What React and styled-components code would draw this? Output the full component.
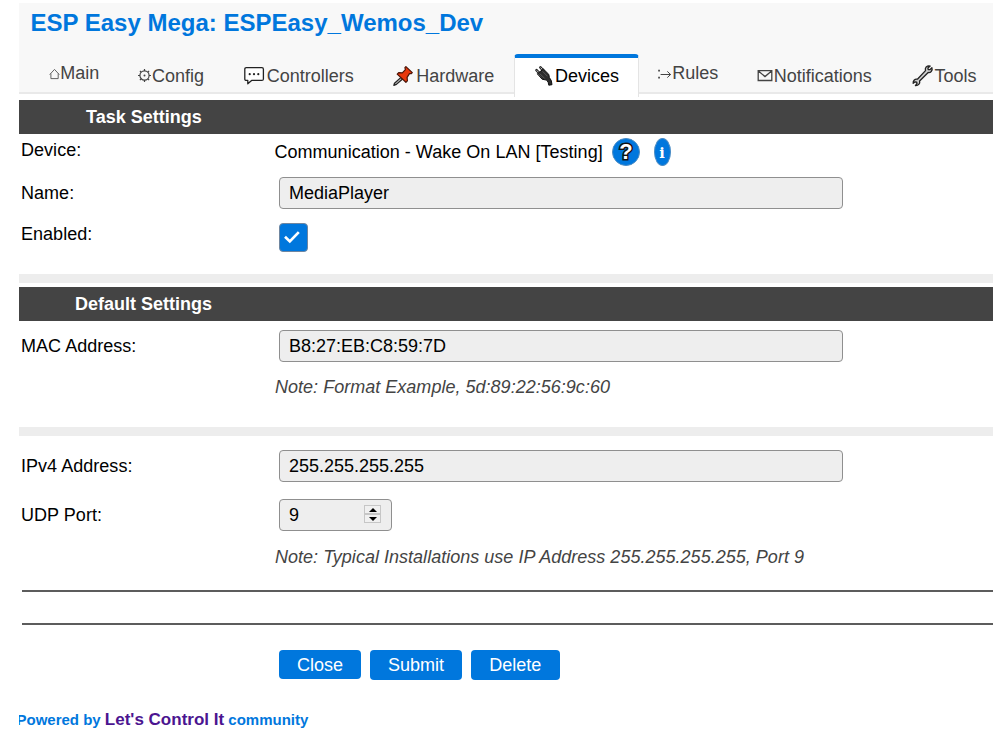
import React from "react";
import styled, { createGlobalStyle } from "styled-components";

const GlobalStyle = createGlobalStyle`
  * { box-sizing: border-box; }
  body {
    margin: 0;
    background: #fff;
    color: #000;
    font-family: "Liberation Sans", Arial, sans-serif;
    font-size: 18px;
    line-height: 20px;
  }
`;

const Page = styled.main`
  width: 974px;
  margin-left: 19px;
  padding-top: 3px;
  height: 750px;
  overflow: hidden;
`;

const Header = styled.header`
  height: 91px;
  background: #f8f8f8;
  border-bottom: 2px solid #e9e9e9;
`;

const Title = styled.h1`
  margin: 0;
  padding: 6px 0 0 11.5px;
  height: 51px;
  font-size: 24px;
  line-height: 28px;
  color: #0077dd;
`;

const Nav = styled.nav`
  display: flex;
  height: 43px;
`;

const Tab = styled.a`
  display: flex;
  width: ${(p) => p.$width}px;
  padding: ${(p) => (p.$raised ? 9 : 12)}px 0 0 ${(p) => p.$inset}px;
  height: 43px;
  color: #444;
  white-space: nowrap;
  border: 0 solid transparent;
  ${(p) =>
    p.$active &&
    `
    padding-top: 8px;
    padding-left: 20px;
    color: #000;
    background: #fff;
    border: 1px solid #e4e4e4;
    border-top: 4px solid #0077dd;
    border-bottom: 0;
    border-radius: 4px 4px 0 0;
  `}
`;

const Glyph = styled.span`
  flex: none;
  width: ${(p) => p.$width}px;
  height: 22px;

  svg {
    display: block;
    overflow: visible;
  }
`;

const SectionBar = styled.h2`
  margin: ${(p) => p.$top}px 0 0;
  height: ${(p) => p.$height}px;
  padding: 7px 0 0 ${(p) => p.$indent}px;
  font-size: 18px;
  line-height: 20px;
  color: #fff;
  background: #444;
`;

const Separator = styled.div`
  height: 9px;
  background: #ededed;
`;

const Row = styled.div`
  display: grid;
  grid-template-columns: 253.5px 1fr;
  align-items: start;
  height: ${(p) => p.$height}px;
  padding-left: 1.5px;
`;

const Label = styled.label`
  padding-top: ${(p) => p.$top}px;
  padding-left: 0.5px;
  letter-spacing: 0.03px;
`;

const Field = styled.div`
  display: flex;
  padding-top: ${(p) => p.$top}px;
  padding-left: 5px;
`;

const DeviceValue = styled.div`
  display: flex;
  padding-top: 4px;
`;

const DeviceName = styled.span`
  width: 338px;
  padding-top: 4px;
  padding-left: 0.5px;
  letter-spacing: 0.02px;
`;

const RoundButton = styled.a`
  display: flex;
  align-items: center;
  justify-content: center;
  width: ${(p) => p.$width}px;
  height: 28px;
  margin-right: 13.5px;
  border-radius: 50%;
  border: 1px solid #4b8cc4;
  background: #0077dd;
`;

const QuestionMark = styled.span`
  color: #fff;
  font-size: 22px;
  font-weight: bold;
  line-height: 24px;
  -webkit-text-stroke: 3px #111;
  paint-order: stroke fill;
`;

const InfoMark = styled.span`
  padding-top: 2px;
  color: #fff;
  font-family: "DejaVu Serif", serif;
  font-size: 14.5px;
  font-weight: bold;
  line-height: 22px;
`;

const TextBox = styled.input`
  width: 563.5px;
  height: 32px;
  padding: 1px 9px 0;
  border: 1px solid #8f8f8f;
  border-radius: 4px;
  background: #eee;
  color: #000;
  font: 18px "Liberation Sans", Arial, sans-serif;
  outline: 0;
`;

const NumberBox = styled.div`
  display: flex;
  justify-content: space-between;
  width: 113px;
  height: 32px;
  padding: 5px 10px 0 9px;
  border: 1px solid #8f8f8f;
  border-radius: 4px;
  background: #eee;
`;

const Spinner = styled.span`
  display: flex;
  flex-direction: column;
  width: 17px;
  height: 18px;
`;

const Step = styled.span`
  display: flex;
  align-items: center;
  justify-content: center;
  height: 9px;
  border: 1px solid #c6c6c6;
  background: #f0f0f0;

  &::after {
    content: "";
    border: 4px solid transparent;
    border-top-width: ${(p) => (p.$down ? 4 : 0)}px;
    border-bottom-width: ${(p) => (p.$down ? 0 : 4)}px;
    border-top-color: ${(p) => (p.$down ? "#000" : "transparent")};
    border-bottom-color: ${(p) => (p.$down ? "transparent" : "#000")};
  }
`;

const Checkbox = styled.span`
  width: 29px;
  height: 29px;
  border: 1px solid #6f86a0;
  border-radius: 4px;
  background: #0077dd;

  svg { display: block; }
`;

const Note = styled.em`
  display: block;
  padding-top: ${(p) => p.$top || 0}px;
  padding-left: 256px;
  height: ${(p) => p.$height}px;
  color: #444;
  letter-spacing: 0.02px;
`;

const Rule = styled.hr`
  height: 2px;
  margin: 0 0 ${(p) => p.$gap}px 2.5px;
  border: 0;
  background: #5c5c5c;
`;

const Actions = styled.div`
  display: flex;
  gap: 9px;
  height: 59px;
  padding-left: 260px;
`;

const Button = styled.button`
  width: ${(p) => p.$width}px;
  height: ${(p) => p.$height || 30}px;
  padding: ${(p) => (p.$height ? 1 : 0)}px 0 0;
  border: 0;
  border-radius: 4px;
  background: #0077dd;
  color: #fff;
  font: 18px "Liberation Sans", Arial, sans-serif;
`;

const Footer = styled.footer`
  margin-left: -2.5px;
  font-size: 15px;
  font-weight: bold;
  line-height: 21px;
  color: #0077dd;
  white-space: nowrap;
`;

const Community = styled.a`
  font-size: 17px;
  color: #4b1590;
`;

const HouseIcon = () => (
  <svg width="12" height="22" viewBox="0 0 12 22" fill="none" stroke="#555" strokeWidth="0.9">
    <path d="M0.7 11.6 5.5 6.4l4.8 5.2M1.9 10.6v5h7.3v-5" />
  </svg>
);

const GearIcon = () => (
  <svg width="14" height="22" viewBox="0 0 14 22" fill="none" stroke="#444" strokeWidth="1.2">
    <circle cx="6.5" cy="9.5" r="4.6" />
    <path d="M6.5 3v2M6.5 14v2M0 9.5h2M11 9.5h2M1.9 4.9l1.4 1.4M9.7 12.7l1.4 1.4M11.1 4.9 9.7 6.3M3.3 12.7l-1.4 1.4" />
    <circle cx="6.5" cy="9.5" r="1" fill="#444" stroke="none" />
  </svg>
);

const BubbleIcon = () => (
  <svg width="22" height="22" viewBox="0 0 22 22">
    <path
      d="M2.3 1.7h15.6q1.5 0 1.5 1.5v9.7q0 1.5-1.5 1.5H7.6L3.8 17.7v-3.3H2.3q-1.5 0-1.5-1.5V3.2q0-1.5 1.5-1.5z"
      fill="#fff"
      stroke="#222"
      strokeWidth="1.3"
      strokeLinejoin="round"
    />
    <g fill="#222">
      <circle cx="5.7" cy="8.2" r="1.1" />
      <circle cx="10" cy="8.2" r="1.1" />
      <circle cx="14.3" cy="8.2" r="1.1" />
    </g>
  </svg>
);

const PinIcon = () => (
  <svg width="22" height="22" viewBox="0 0 22 22" strokeLinejoin="round">
    <path d="M8 11.4 9.6 13 3.4 18.4 0.8 19.4l.7-2.2z" fill="#bbb" stroke="#222" strokeWidth="1.2" />
    <path
      d="M12.9 0.6 19.3 6.6l-1 1.1-1.8-.1-2.4 3.8.3 3.4-1.5 1.5L4.2 8.1l1.5-1.5 3.6.3 3.1-3.2-.5-2z"
      fill="#e8380c"
      stroke="#4a1508"
      strokeWidth="1.2"
    />
  </svg>
);

const PlugIcon = () => (
  <svg width="21" height="22" viewBox="0 0 21 22" strokeLinejoin="round" strokeLinecap="round">
    <path d="M1.5 4.2 4.5 7.4M5.4 1.4 8.3 4.6" stroke="#222" strokeWidth="2.6" />
    <path d="M2 4.7 4 6.8M5.8 1.8 7.8 4" stroke="#ddd" strokeWidth="0.9" />
    <path
      d="M2.6 7.6 8.4 3l5.4 5.4.6 3.3q2.4 2 2.6 7l-3.2.5q-.2-3.4-2.2-5.1l-4.1-.8z"
      fill="#2d2d2d"
      stroke="#111"
      strokeWidth="1"
    />
    <path d="M5 7.8l4.4 4.4M7.8 5.6l4.4 4.4" stroke="#777" strokeWidth="0.6" />
  </svg>
);

const RuleIcon = () => (
  <svg width="16" height="22" viewBox="0 0 16 22" fill="none" stroke="#444" strokeWidth="1">
    <path d="M1.2 7.6h1.7M1.2 14.6h1.7" strokeWidth="1.7" />
    <path d="M3.6 11.5h10M10.3 8.4l3.3 3.1-3.3 3.1" />
  </svg>
);

const EnvelopeIcon = () => (
  <svg width="17" height="22" viewBox="0 0 17 22" fill="none" stroke="#444" strokeWidth="1.3">
    <path d="M1.2 4.7h13.6v9.8H1.2zM1.4 5 8 10.6 14.6 5" />
  </svg>
);

const WrenchIcon = () => (
  <svg width="23" height="22" viewBox="0 0 23 22">
    <path
      d="M14.2 0.9q1.8-1.6 4-.9L15.9 2l.3 1.5 1.6.2 2.1-1.9q.8 2-.7 3.7-1.2 1.3-3 1L7.6 15q.6 1.9-.8 3.4-1.3 1.4-3.4 1.2l1.6-2.1-.3-1.4-1.5-.3-2 1.5q-.3-1.8.9-3.1 1.3-1.4 3.3-1L13.5 4.6q-.6-2.2.7-3.7z"
      fill="#ccc"
      stroke="#222"
      strokeWidth="1.3"
      strokeLinejoin="round"
    />
  </svg>
);

const TABS = [
  { name: "Main", icon: HouseIcon, glyph: 11.3, inset: 30, width: 118, raised: true },
  { name: "Config", icon: GearIcon, glyph: 14, inset: 1, width: 106 },
  { name: "Controllers", icon: BubbleIcon, glyph: 23, inset: 0.7, width: 149 },
  { name: "Hardware", icon: PinIcon, glyph: 23, inset: 1.3, width: 122 },
  { name: "Devices", icon: PlugIcon, glyph: 20, width: 124.5, active: true },
  { name: "Rules", icon: RuleIcon, glyph: 15, inset: 18.8, width: 117.5, raised: true },
  { name: "Notifications", icon: EnvelopeIcon, glyph: 17, inset: 0.7, width: 155 },
  { name: "Tools", icon: WrenchIcon, glyph: 22.5, inset: 1, width: 82 },
];

export default function App() {
  return (
    <>
      <GlobalStyle />
      <Page>
        <Header>
          <Title>ESP Easy Mega: ESPEasy_Wemos_Dev</Title>
          <Nav>
            {TABS.map(({ name, icon: Icon, glyph, inset, width, raised, active }) => (
              <Tab key={name} $width={width} $inset={inset} $raised={raised} $active={active}>
                <Glyph $width={glyph}>
                  <Icon />
                </Glyph>
                {name}
              </Tab>
            ))}
          </Nav>
        </Header>

        <SectionBar $top={6} $height={34} $indent={67}>Task Settings</SectionBar>
        <Row $height={39}>
          <Label $top={6}>Device:</Label>
          <DeviceValue>
            <DeviceName>Communication - Wake On LAN [Testing]</DeviceName>
            <RoundButton $width={28}>
              <QuestionMark>?</QuestionMark>
            </RoundButton>
            <RoundButton $width={17}>
              <InfoMark>i</InfoMark>
            </RoundButton>
          </DeviceValue>
        </Row>
        <Row $height={46}>
          <Label $top={10}>Name:</Label>
          <Field $top={4}>
            <TextBox defaultValue="MediaPlayer" />
          </Field>
        </Row>
        <Row $height={55}>
          <Label $top={5}>Enabled:</Label>
          <Field $top={4}>
            <Checkbox>
              <svg width="27" height="27" viewBox="0 0 27 27" fill="none" stroke="#fff" strokeWidth="2.7">
                <path d="M5 12.8l4.8 4.6 9-9.3" />
              </svg>
            </Checkbox>
          </Field>
        </Row>
        <Separator />

        <SectionBar $top={4} $height={34} $indent={56}>Default Settings</SectionBar>
        <Row $height={56}>
          <Label $top={15}>MAC Address:</Label>
          <Field $top={9}>
            <TextBox defaultValue="B8:27:EB:C8:59:7D" />
          </Field>
        </Row>
        <Note $height={50}>Note: Format Example, 5d:89:22:56:9c:60</Note>
        <Separator />

        <Row $height={58}>
          <Label $top={20}>IPv4 Address:</Label>
          <Field $top={14}>
            <TextBox defaultValue="255.255.255.255" />
          </Field>
        </Row>
        <Row $height={52}>
          <Label $top={11}>UDP Port:</Label>
          <Field $top={5.4}>
            <NumberBox>
              9
              <Spinner>
                <Step />
                <Step $down />
              </Spinner>
            </NumberBox>
          </Field>
        </Row>
        <Note $height={44} $top={1}>Note: Typical Installations use IP Address 255.255.255.255, Port 9</Note>

        <Rule $gap={31} />
        <Rule $gap={25} />

        <Actions>
          <Button $width={82} $height={29}>Close</Button>
          <Button $width={92}>Submit</Button>
          <Button $width={88.5}>Delete</Button>
        </Actions>

        <Footer>
          Powered by <Community>Let's Control It</Community> community
        </Footer>
      </Page>
    </>
  );
}
